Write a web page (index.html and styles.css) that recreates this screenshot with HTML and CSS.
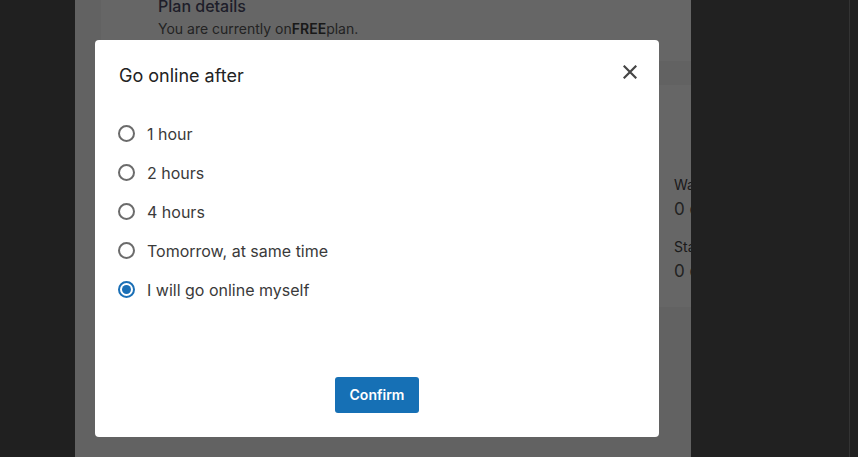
FILE: index.html
```html
<!DOCTYPE html>
<html lang="en">
<head>
    <meta charset="UTF-8">
    <meta name="viewport" content="width=device-width, initial-scale=1.0">
    <title>Go online after</title>
    <link rel="stylesheet" href="styles.css">
</head>
<body>
    <div class="janela">
        <aside class="lateral"></aside>

        <main class="painel">
            <div class="conteudo">
                <section class="cartao cartao-plano">
                    <h2 class="plano-titulo">Plan details</h2>
                    <p class="plano-texto">You are currently on<b>FREE</b>plan.</p>
                </section>

                <section class="cartao cartao-stats">
                    <div class="stats-area"></div>
                    <div class="stats">
                        <div class="stat">
                            <span class="stat-nome">Waiting</span>
                            <span class="stat-valor">0 chats</span>
                        </div>
                        <div class="stat">
                            <span class="stat-nome">Started</span>
                            <span class="stat-valor">0 chats</span>
                        </div>
                    </div>
                </section>
            </div>

            <!-- Fundo escuro do modal -->
            <div class="sobreposicao">
                <div class="modal">
                    <div class="modal-topo">
                        <h3 class="modal-titulo">Go online after</h3>
                        <button class="fechar" aria-label="Close">
                            <svg width="14" height="14" viewBox="0 0 14 14">
                                <path d="M1.5 1.5 L12.5 12.5 M12.5 1.5 L1.5 12.5" stroke="#454545" stroke-width="2.2" stroke-linecap="square"/>
                            </svg>
                        </button>
                    </div>

                    <div class="opcoes">
                        <label class="opcao"><input type="radio" name="tempo"><span>1 hour</span></label>
                        <label class="opcao"><input type="radio" name="tempo"><span>2 hours</span></label>
                        <label class="opcao"><input type="radio" name="tempo"><span>4 hours</span></label>
                        <label class="opcao"><input type="radio" name="tempo"><span>Tomorrow, at same time</span></label>
                        <label class="opcao"><input type="radio" name="tempo" checked><span>I will go online myself</span></label>
                    </div>

                    <div class="modal-rodape">
                        <button class="confirmar">Confirm</button>
                    </div>
                </div>
            </div>
        </main>

        <aside class="direita"></aside>
    </div>
</body>
</html>
```

FILE: styles.css
```css
* {
    box-sizing: border-box;
}

body {
    margin: 0;
    font-family: Inter, "Noto Sans", Arial, sans-serif;
    background-color: #202020;
}

.janela {
    display: flex;
    height: 457px;
    overflow: hidden;
}

.lateral {
    width: 75px;
    flex-shrink: 0;
    background-color: #202020;
}

.painel {
    position: relative;
    width: 616px;
    flex-shrink: 0;
    overflow: hidden;
    background-color: #f5f5f5;
}

.conteudo {
    width: 900px;
    padding-left: 26px;
    display: flex;
    flex-direction: column;
    gap: 24px;
}

.cartao {
    background-color: #ffffff;
}

.cartao-plano {
    height: 67px;
    padding: 0 0 0 57px;
    margin-top: -6px;
}

.plano-titulo {
    margin: 0;
    font-size: 16px;
    font-weight: 500;
    line-height: 24px;
    color: #4d4d68;
}

.plano-texto {
    margin: 0;
    font-size: 14px;
    line-height: 22px;
    color: #585858;
}

.plano-texto b {
    font-weight: 600;
    color: #404040;
}

.cartao-stats {
    height: 222px;
    display: grid;
    grid-template-columns: 573px auto;
}

.stats {
    padding-top: 88px;
    display: flex;
    flex-direction: column;
    gap: 14px;
}

.stat {
    display: flex;
    flex-direction: column;
}

.stat-nome {
    font-size: 14px;
    line-height: 24px;
    color: #444;
}

.stat-valor {
    font-size: 17px;
    line-height: 24px;
    color: #555;
}

.sobreposicao {
    position: absolute;
    inset: 0;
    background-color: rgba(0, 0, 0, 0.6);
    padding: 40px 0 0 20px;
}

.modal {
    width: 564px;
    height: 397px;
    background-color: #ffffff;
    border-radius: 4px;
    display: flex;
    flex-direction: column;
}

.modal-topo {
    display: flex;
    justify-content: space-between;
    align-items: flex-start;
    padding: 20px 17px 0 24px;
}

.modal-titulo {
    margin: 4px 0 0 0;
    font-size: 18px;
    font-weight: 400;
    line-height: 24px;
    color: #222;
}

.fechar {
    width: 24px;
    height: 24px;
    padding: 0;
    border: none;
    background: none;
    display: flex;
    align-items: center;
    justify-content: center;
    cursor: pointer;
}

.opcoes {
    flex: 1;
    padding: 26px 0 0 23px;
    display: flex;
    flex-direction: column;
}

.opcao {
    height: 39px;
    display: flex;
    align-items: center;
    gap: 12px;
    font-size: 16px;
    color: #3a3a3a;
    cursor: pointer;
}

.opcao input {
    appearance: none;
    margin: 0;
    width: 17px;
    height: 17px;
    border: 2px solid #6b6b6b;
    border-radius: 50%;
    display: flex;
    align-items: center;
    justify-content: center;
    cursor: pointer;
}

.opcao input:checked {
    border-color: #1a6fb6;
}

.opcao input:checked::after {
    content: "";
    width: 9px;
    height: 9px;
    border-radius: 50%;
    background-color: #1a6fb6;
}

.modal-rodape {
    display: flex;
    justify-content: center;
    padding-bottom: 24px;
}

.confirmar {
    width: 84px;
    height: 36px;
    border: none;
    border-radius: 3px;
    background-color: #1670b5;
    color: #ffffff;
    font-family: Inter, "Noto Sans", Arial, sans-serif;
    font-size: 14px;
    font-weight: 600;
    line-height: 34px;
    cursor: pointer;
}

.direita {
    flex: 1;
    background-color: #212121;
    display: flex;
    justify-content: flex-end;
}

.direita::after {
    content: "";
    width: 8px;
    border-left: 1px solid #333;
}
```
